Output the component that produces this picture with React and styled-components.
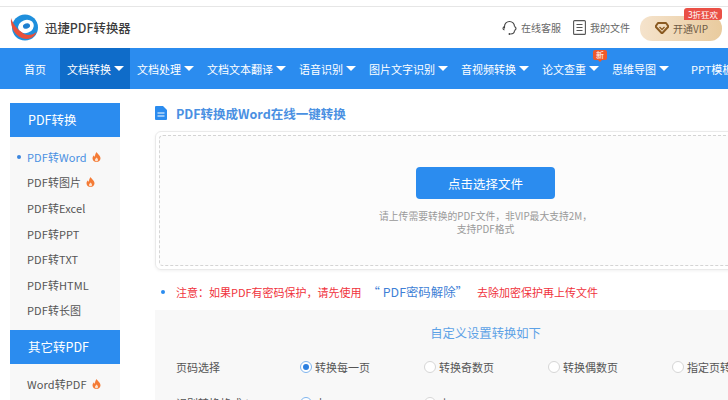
import React from 'react'
import styled, { createGlobalStyle } from 'styled-components'

const GlobalStyle = createGlobalStyle`
  html, body {
    margin: 0;
    padding: 0;
    background: #fff;
  }
  body {
    width: 728px;
    height: 400px;
    overflow: hidden;
    font-family: "Noto Sans CJK SC", "Noto Sans", sans-serif;
    color: #555;
  }
`

const Page = styled.div`
  width: 728px;
  height: 400px;
  overflow: hidden;
  padding-top: 6px;
  box-sizing: border-box;
`

const Header = styled.header`
  height: 41px;
  border-top: 1px solid #e6e6e6;
  display: flex;
  align-items: center;
  padding: 0 6px 0 10px;
`

const Brand = styled.div`
  display: flex;
  align-items: center;
  gap: 7px;
  font-size: 12.4px;
  font-weight: 500;
  color: #3c3c3c;
`

const HeaderRight = styled.div`
  margin-left: auto;
  display: flex;
  align-items: center;
`

const HeaderLink = styled.div`
  display: flex;
  align-items: center;
  gap: 4px;
  font-size: 10px;
  color: #666;
  margin-right: ${props => props.$gap}px;
`

const VipButton = styled.div`
  position: relative;
  width: 82px;
  height: 25px;
  margin-top: 1px;
  border-radius: 12px;
  background: linear-gradient(90deg, #f5e3cc, #e9cb9e);
  display: flex;
  align-items: center;
  padding-left: 15px;
  box-sizing: border-box;
  gap: 4px;
  font-size: 10px;
  color: #6d5a45;
`

const VipBadge = styled.span`
  position: absolute;
  top: -8px;
  right: 0;
  width: 38px;
  height: 12px;
  line-height: 12px;
  text-align: center;
  font-size: 8.5px;
  color: #fff;
  background: #ea5046;
  border-radius: 3px 3px 3px 0;
`

const Nav = styled.nav`
  height: 41px;
  background: #2b8cef;
  display: flex;
  align-items: stretch;
  padding-left: 17px;
  white-space: nowrap;
`

const NavItem = styled.div`
  position: relative;
  display: flex;
  align-items: center;
  flex: none;
  padding: 0 6px 0 7px;
  margin-right: ${props => props.$mr || 0}px;
  font-size: 11px;
  color: #fff;
  background: ${props => (props.$active ? '#0f6cc9' : 'transparent')};
`

const Caret = styled.i`
  width: 0;
  height: 0;
  margin-left: 3px;
  border-left: 5px solid transparent;
  border-right: 5px solid transparent;
  border-top: 5px solid #fff;
`

const NewBadge = styled.span`
  position: absolute;
  top: 2px;
  right: -2px;
  width: 14px;
  height: 10px;
  line-height: 10px;
  text-align: center;
  font-size: 8px;
  color: #fff;
  background: #ee5a2b;
  border-radius: 2px;
  &::after {
    content: '';
    position: absolute;
    left: 5px;
    top: 10px;
    border-left: 2px solid transparent;
    border-right: 2px solid transparent;
    border-top: 2px solid #ee5a2b;
  }
`

const Body = styled.div`
  display: flex;
  align-items: flex-start;
  padding: 14px 0 0 10px;
`

const Sidebar = styled.aside`
  width: 110px;
  flex: none;
  margin-right: 35px;
`

const SideTitle = styled.div`
  height: 34px;
  line-height: 34px;
  padding-left: 18px;
  background: #2b8cef;
  color: #fff;
  font-size: 12.5px;
`

const SideList = styled.ul`
  list-style: none;
  margin: 0;
  padding: 7px 0;
  background: #f8f8f8;
`

const SideItem = styled.li`
  position: relative;
  height: 25.6px;
  display: flex;
  align-items: center;
  gap: 5px;
  padding-left: 17px;
  font-size: 11px;
  letter-spacing: 0.1px;
  color: ${props => (props.$active ? '#4a90e2' : '#555')};
`

const Dot = styled.span`
  position: absolute;
  left: 7px;
  top: 11px;
  width: 4px;
  height: 4px;
  border-radius: 50%;
  background: #3b86de;
`

const Main = styled.main`
  width: 661px;
  flex: none;
`

const MainTitle = styled.h1`
  margin: 2px 0 10px;
  height: 16px;
  display: flex;
  align-items: center;
  gap: 9px;
  font-size: 12.5px;
  font-weight: 700;
  color: #4a90e2;
`

const UploadBox = styled.div`
  height: 139px;
  box-sizing: border-box;
  padding: 3px;
  border: 1px solid #eaeaea;
  border-radius: 6px;
  box-shadow: 0 1px 3px rgba(0, 0, 0, 0.06);
`

const DashedArea = styled.div`
  height: 100%;
  box-sizing: border-box;
  border: 1px dashed #d4d4d4;
  border-radius: 4px;
  background: #fcfcfc;
  display: flex;
  flex-direction: column;
  align-items: center;
  padding-top: 31px;
`

const UploadButton = styled.button`
  width: 139px;
  height: 32px;
  border: 0;
  border-radius: 4px;
  background: #2b8cef;
  color: #fff;
  font: inherit;
  font-size: 12.5px;
`

const Hint = styled.p`
  margin: 11px 0 0;
  font-size: 9.8px;
  line-height: 13px;
  color: #999;
  text-align: center;
`

const Notice = styled.div`
  height: 40px;
  box-sizing: border-box;
  padding: 4px 0 0 6px;
  display: flex;
  align-items: center;
  font-size: 11px;
  color: #f0323c;
  white-space: nowrap;
`

const NoticeDot = styled.span`
  width: 4px;
  height: 4px;
  border-radius: 50%;
  background: #2b8cef;
  margin-right: 11px;
`

const NoticeLink = styled.span`
  margin: 0 9px 0 6px;
  font-size: 12.4px;
  color: #3f7fd6;
`

const Settings = styled.section`
  background: #f8f8f8;
  height: 100px;
  padding-top: 14px;
  box-sizing: border-box;
`

const SettingsTitle = styled.div`
  text-align: center;
  font-size: 12.3px;
  line-height: 18px;
  color: #5da2e6;
  margin-bottom: 7px;
`

const Row = styled.div`
  display: flex;
  align-items: center;
  height: 36px;
  padding-left: 21px;
  font-size: 11px;
  color: #555;
  white-space: nowrap;
`

const RowLabel = styled.div`
  width: 124px;
  flex: none;
`

const Option = styled.label`
  width: 124px;
  flex: none;
  display: flex;
  align-items: center;
  gap: 3px;
`

const Radio = styled.span`
  width: 12px;
  height: 12px;
  box-sizing: border-box;
  border-radius: 50%;
  border: 1px solid ${props => (props.$on ? '#7fb5ee' : '#d6d6d6')};
  background: #fff;
  display: flex;
  align-items: center;
  justify-content: center;
  &::after {
    content: '';
    width: 6px;
    height: 6px;
    border-radius: 50%;
    background: ${props => (props.$on ? '#2b7fe0' : 'transparent')};
  }
`

function Logo () {
  return <svg width="28" height="28" viewBox="0 0 28 28">
    <circle cx="15" cy="13.5" r="13" fill="#1f8fdc" />
    <ellipse cx="16" cy="12.5" rx="8" ry="6.5" fill="#fff" transform="rotate(-20 16 12.5)" />
    <ellipse cx="16.5" cy="12" rx="3.6" ry="2.6" fill="#1f7fd0" transform="rotate(-20 16.5 12)" />
    <path d="M1 4C0 13 5 24 16 25c5 .3 9-3 10.500-7-5 4-11 4-15 0C7 15 3 10 1 4z" fill="#e8503a" />
  </svg>
}

function Headset () {
  return <svg width="15" height="16" viewBox="0 0 15 16" fill="none" stroke="#444" strokeWidth="1.1">
    <path d="M2.500 8.500V6.500a5 5 0 0 1 10 0" />
    <path d="M12.500 6.500c1 .5 1.500 1.200 1.500 2s-.5 1.500-1.500 2" />
    <path d="M2.500 6.500C1.500 7 1 7.700 1 8.500s.5 1.300 1.500 1.500" />
    <path d="M12.500 10.500c0 2.500-2 3.500-4 3.500" />
    <circle cx="7.500" cy="14" r="1" fill="#444" stroke="none" />
  </svg>
}

function FileLines () {
  return <svg width="13" height="15" viewBox="0 0 13 15" fill="none" stroke="#555" strokeWidth="1.100">
    <rect x="0.600" y="0.600" width="11.800" height="13.800" rx="1" />
    <path d="M3.500 4.500h6M3.500 7.500h6M3.500 10.500h6" />
  </svg>
}

function Diamond () {
  return <svg width="14" height="12" viewBox="0 0 14 12">
    <path d="M3 1h8l2.500 3.500L7 11.500.5 4.500z" fill="none" stroke="#8a5a22" strokeWidth="2" strokeLinejoin="round" />
    <path d="M4.500 5L7 7.500 9.500 5" fill="none" stroke="#8a5a22" strokeWidth="1.300" />
  </svg>
}

function Fire () {
  return <svg width="9" height="10" viewBox="0 0 9 10">
    <path d="M4.700 0c.4 1.700 3.800 3.300 3.800 6.200C8.500 8.400 6.700 10 4.500 10S.5 8.400.5 6.300C.5 4.900 1.200 4 2 3.200c.1.800.4 1.300 1 1.600C2.900 3 3.500 1.300 4.700 0z" fill="#f47b36" />
    <path d="M4.500 5.500c.9.800 1.500 1.500 1.500 2.400S5.300 9.300 4.500 9.300 3 8.800 3 7.900s.8-1.500 1.500-2.400z" fill="#fde3cf" />
  </svg>
}

function DocIcon () {
  return <svg width="12" height="14" viewBox="0 0 12 14">
    <path d="M1 0h7l4 4v9a1 1 0 0 1-1 1H1a1 1 0 0 1-1-1V1a1 1 0 0 1 1-1z" fill="#2b8cef" />
    <path d="M2.500 7h7M2.500 10h7" stroke="#fff" strokeWidth="1.200" />
  </svg>
}

const navItems = [
  { text: '首页', mr: 8, plain: true },
  { text: '文档转换', active: true },
  { text: '文档处理' },
  { text: '文档文本翻译' },
  { text: '语音识别' },
  { text: '图片文字识别' },
  { text: '音视频转换' },
  { text: '论文查重', badge: true },
  { text: '思维导图', mr: 9 },
  { text: 'PPT模板', plain: true }
]

const pdfItems = [
  { text: 'PDF转Word', active: true, hot: true },
  { text: 'PDF转图片', hot: true },
  { text: 'PDF转Excel' },
  { text: 'PDF转PPT' },
  { text: 'PDF转TXT' },
  { text: 'PDF转HTML' },
  { text: 'PDF转长图' }
]

const pageOptions = ['转换每一页', '转换奇数页', '转换偶数页', '指定页转换']

export default function App () {
  return <Page>
    <GlobalStyle />
    <Header>
      <Brand>
        <Logo />
        迅捷PDF转换器
      </Brand>
      <HeaderRight>
        <HeaderLink $gap={12}><Headset />在线客服</HeaderLink>
        <HeaderLink $gap={10}><FileLines />我的文件</HeaderLink>
        <VipButton>
          <Diamond />
          开通VIP
          <VipBadge>3折狂欢</VipBadge>
        </VipButton>
      </HeaderRight>
    </Header>
    <Nav>
      {navItems.map(item => <NavItem key={item.text} $active={item.active} $mr={item.mr}>
        {item.text}
        {!item.plain && <Caret />}
        {item.badge && <NewBadge>新</NewBadge>}
      </NavItem>)}
    </Nav>
    <Body>
      <Sidebar>
        <SideTitle>PDF转换</SideTitle>
        <SideList>
          {pdfItems.map(item => <SideItem key={item.text} $active={item.active}>
            {item.active && <Dot />}
            {item.text}
            {item.hot && <Fire />}
          </SideItem>)}
        </SideList>
        <SideTitle>其它转PDF</SideTitle>
        <SideList>
          <SideItem>Word转PDF <Fire /></SideItem>
        </SideList>
      </Sidebar>
      <Main>
        <MainTitle><DocIcon />PDF转换成Word在线一键转换</MainTitle>
        <UploadBox>
          <DashedArea>
            <UploadButton>点击选择文件</UploadButton>
            <Hint>请上传需要转换的PDF文件，非VIP最大支持2M，<br />支持PDF格式</Hint>
          </DashedArea>
        </UploadBox>
        <Notice>
          <NoticeDot />
          注意：如果PDF有密码保护，请先使用
          <NoticeLink>“ PDF密码解除”</NoticeLink>
          去除加密保护再上传文件
        </Notice>
        <Settings>
          <SettingsTitle>自定义设置转换如下</SettingsTitle>
          <Row>
            <RowLabel>页码选择</RowLabel>
            {pageOptions.map((text, i) => <Option key={text}><Radio $on={i === 0} />{text}</Option>)}
          </Row>
          <Row>
            <RowLabel>识别转换格式 *</RowLabel>
            <Option><Radio $on />大</Option>
            <Option><Radio />小</Option>
          </Row>
        </Settings>
      </Main>
    </Body>
  </Page>
}
